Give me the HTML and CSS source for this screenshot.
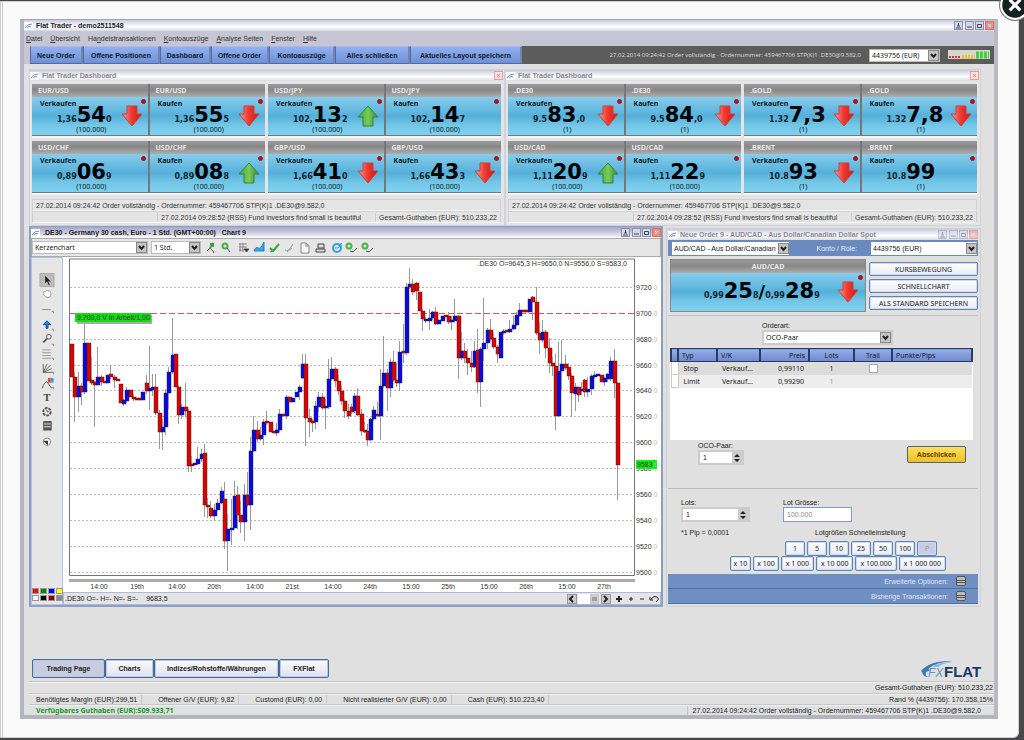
FILE: index.html
```html
<!DOCTYPE html>
<html lang="de">
<head>
<meta charset="utf-8">
<title>Flat Trader</title>
<link rel="stylesheet" href="styles.css">
</head>
<body>
<svg class="defs" aria-hidden="true">
  <defs>
    <linearGradient id="redg" x1="0" x2="1"><stop offset="0" stop-color="#f9a097"/><stop offset=".45" stop-color="#f23c35"/><stop offset="1" stop-color="#c81512"/></linearGradient>
    <linearGradient id="greeng" x1="0" x2="1"><stop offset="0" stop-color="#3fa53a"/><stop offset=".5" stop-color="#7cc957"/><stop offset="1" stop-color="#2f8e34"/></linearGradient>
    <symbol id="down" viewBox="0 0 22 22"><path d="M6 1h10v8h5L11 21 1 9h5z" fill="url(#redg)" stroke="#c9423c"/></symbol>
    <symbol id="up" viewBox="0 0 22 22"><path d="M11 1l10 11h-5v9H6v-9H1z" fill="url(#greeng)" stroke="#2f8544"/></symbol>
    <symbol id="mark" viewBox="0 0 9 8"><path d="M0 0h9v8H0z" fill="#fff"/><path d="M1 6q2-4 7-4M3 6q2-3 4-1" fill="none" stroke="#5c92bd"/></symbol>
    <symbol id="winbtns" viewBox="0 0 40 9">
      <g fill="#d6d8e8" stroke="#8b90ac"><rect x=".5" y=".5" width="8" height="8"/><rect x="11.500" y=".5" width="8" height="8"/><rect x="21.500" y=".5" width="8" height="8"/></g>
      <rect x="31.500" y=".5" width="8" height="8" fill="#ee8f86" stroke="#dd6a62"/>
      <path d="M4.500 2v3M2 7h5M3 5h3M13 6h5M23.500 3.500h4v3h-4z" fill="none" stroke="#40465f"/>
      <path d="M34 3l3 3m0-3l-3 3" stroke="#fff"/>
    </symbol>
    <symbol id="closebtn" viewBox="0 0 9 9"><rect x=".5" y=".5" width="8" height="8" fill="#fbe3e1" stroke="#eb9c96"/><path d="M3 3l3 3m0-3L3 6" stroke="#e37c75"/></symbol>
  </defs>
</svg>
<div class="frame">
  <main class="app">
    <header class="titlebar"><svg class="mark"><use href="#mark"/></svg><b>Flat Trader - demo2511548</b><svg class="winbtns"><use href="#winbtns"/></svg></header>
    <nav class="menu"><a href="#"><u>D</u>atei</a><a href="#"><u>Ü</u>bersicht</a><a href="#">Ha<u>n</u>delstransaktionen</a><a href="#"><u>K</u>ontoauszüge</a><a href="#"><u>A</u>nalyse Seiten</a><a href="#"><u>F</u>enster</a><a href="#"><u>H</u>ilfe</a></nav>
    <div class="toolbar">
      <button>Neue Order</button><button>Offene Positionen</button><button>Dashboard</button><button>Offene Order</button><button>Kontoauszüge</button><button>Alles schließen</button><button>Aktuelles Layout speichern</button>
      <div class="ticker">
        <span>27.02.2014 09:24:42 Order vollständig - Ordernummer: 459467706 STP(K)1 .DE30@9.582,0</span>
        <select class="acct" aria-label="Konto"><option>4439756 (EUR)</option></select>
        <svg class="signal" viewBox="0 0 42 10"><rect width="42" height="9" fill="#d8d4d0"/><path d="M1 7h11" stroke="#d3342e" stroke-width="2" stroke-dasharray="2 1"/><path d="M14 7h13" stroke="#efc32b" stroke-width="4" stroke-dasharray="2 1"/><path d="M28 5h13" stroke="#3ed53a" stroke-width="7" stroke-dasharray="3 1"/></svg>
      </div>
    </div>

    <section class="workspace">
      <div class="dashboards">
        <section class="panel">
          <header class="subtitle"><svg class="mark"><use href="#mark"/></svg><b>Flat Trader Dashboard</b><svg class="closebtn"><use href="#closebtn"/></svg></header>
          <div class="tiles" data-set="fx"></div>
          <div class="status"><p>27.02.2014 09:24:42 Order vollständig - Ordernummer: 459467706 STP(K)1 .DE30@9.582,0</p><p class="right"><span>27.02.2014 09:28:52 (RSS) Fund investors find small is beautiful</span><span>Gesamt-Guthaben (EUR): 510.233,22</span></p></div>
        </section>
        <section class="panel">
          <header class="subtitle"><svg class="mark"><use href="#mark"/></svg><b>Flat Trader Dashboard</b><svg class="closebtn"><use href="#closebtn"/></svg></header>
          <div class="tiles" data-set="cfd"></div>
          <div class="status"><p>27.02.2014 09:24:42 Order vollständig - Ordernummer: 459467706 STP(K)1 .DE30@9.582,0</p><p class="right"><span>27.02.2014 09:28:52 (RSS) Fund investors find small is beautiful</span><span>Gesamt-Guthaben (EUR): 510.233,22</span></p></div>
        </section>
      </div>

      <div class="lower">
        <section class="chartwin">
          <header class="subtitle active"><svg class="mark"><use href="#mark"/></svg><b>.DE30 - Germany 30 cash, Euro - 1 Std. (GMT+00:00) &nbsp; Chart 9</b><svg class="winbtns"><use href="#winbtns"/></svg></header>
          <div class="charttools">
            <select class="kind" aria-label="Charttyp"><option>Kerzenchart</option></select>
            <select class="period" aria-label="Zeitraum"><option>1 Std.</option></select>
            <svg class="icons" viewBox="0 0 170 12" fill="none" stroke="#555">
              <path d="M1 9l3-3 3 3 1 2"/><path d="M4 6l3-5M4 2h3v3" stroke="#35a33a" stroke-width="2"/>
              <circle cx="19" cy="4" r="2.500" stroke="#43b543" stroke-width="2"/><path d="M21 6l3 4"/>
              <path d="M33 2h8M33 5h8M33 8h5M34 1v9M37 1v9" stroke="#888"/><path d="M38 7h5l-2.500 3z" fill="#222"/>
              <path d="M48 9q2-5 4-3t6-6v9z" fill="#35a7dc" stroke="#2384b8"/>
              <path d="M64 10q4 0 6-4" stroke="#777"/><path d="M64 6l3 3 6-7" stroke="#3aa540" stroke-width="2"/>
              <path d="M79 8q3 3 8-6M81 10l5-4" stroke="#999"/>
              <path d="M95 1h5l3 3v7h-8zM100 1v3h3" fill="#f7f7f7" stroke="#888"/>
              <path d="M110 7h9v3h-9zM112 2h6v4h-6z" fill="#ddd" stroke="#444"/>
              <circle cx="131" cy="6" r="4" stroke="#28a4db" stroke-width="2"/><path d="M129 6h3l4-5" stroke="#28a4db"/><path d="M132 4l3-3 1 4z" fill="#28a4db" stroke="none"/>
              <circle cx="143" cy="4" r="2.500" stroke="#43b543" stroke-width="2"/><path d="M144 9l3 1 4-4"/>
              <circle cx="159" cy="4" r="2.500" stroke="#43b543" stroke-width="2"/><path d="M160 9l3 1 4-4"/>
            </svg>
          </div>
          <div class="chartbody">
            <aside class="drawtools">
              <svg viewBox="0 0 32 230" class="drawicons" fill="none" stroke="#555">
                <rect x="8.500" y="16.500" width="15" height="14" fill="#bcbcbc" stroke="#aaa"/><path d="M14 19v8l2-2 2 4 1-1-2-3h3z" fill="#222" stroke="none"/>
                <path d="M12 38q0-3 2-2 1-2 3-1 3-1 3 3v3q-3 3-6 0z" fill="#fff" stroke="#999"/>
                <path d="M11 55h9" stroke="#888"/><path d="M15 75v-4h-3l4-4 4 4h-3v4z" fill="#1c8de5" stroke="#113f9c"/>
                <circle cx="18" cy="84" r="2.500"/><path d="M16 86l-4 4" stroke-width="2"/>
                <path d="M11 98h9M11 101h9M11 104h9M11 107h9" stroke="#999"/><path d="M12 113v9h10M12 122l8-8M12 122l9-4M12 122l4-9" stroke="#666"/>
                <path d="M11 139q2-7 5-7l5 7"/><rect x="17" y="128" width="3" height="5" fill="#e43" stroke="none"/><rect x="20" y="128" width="3" height="5" fill="#28a4db" stroke="none"/>
                <text x="16" y="153" class="tool-t">T</text>
                <circle cx="16" cy="164" r="4" stroke-width="2" stroke-dasharray="3 1"/><path d="M16 162v2h2"/>
                <rect x="12.500" y="174.500" width="8" height="9" fill="#555"/><path d="M13 177h7M13 180h7" stroke="#eee"/>
                <circle cx="16" cy="196" r="4" fill="#fff" stroke="#888"/><path d="M12 195h5v5z" fill="#333" stroke="none"/>
                <path d="M21 57h2v2M21 76h2v2M21 92h2v2M21 107h2v2M21 122h2v2M21 138h2v2" stroke="#888"/>
              </svg>
              <div class="swatches"><i class="red"></i><i class="green"></i><i class="blue"></i><i class="yellow"></i><i class="white"></i><i class="black"></i><i class="maroon"></i><i class="gray"></i></div>
            </aside>
            <div class="plotcol">
              <svg id="plot" viewBox="64 258 598 335"></svg>
              <footer class="chartfoot"><span>.DE30 O=- H=- N=- S=-</span><span>9683,5</span>
                <svg viewBox="0 0 92 10" fill="none" stroke="#222"><rect x=".5" y=".5" width="9" height="9" fill="#ccc" stroke="#999"/><path d="M6 2L3 5l3 3" stroke-width="2"/><path d="M11 0h12v10H11z" fill="#fff" stroke="none"/><path d="M23 0h9v10h-9z" fill="#ccc" stroke="none"/><path d="M25 4h5M25 6h5" stroke="#777"/><rect x="34.500" y=".5" width="9" height="9" fill="#ccc" stroke="#999"/><path d="M37 2l3 3-3 3" stroke-width="2"/><path d="M49 5h6M52 2v6" stroke-width="2"/><path d="M62 5h4M64 3v4M73 5h4"/><path d="M83 3v3h3M84 5q3-4 6-2t-1 5"/></svg>
              </footer>
            </div>
          </div>
        </section>

        <section class="orderwin">
          <header class="subtitle"><svg class="mark"><use href="#mark"/></svg><b>Neue Order 9 - AUD/CAD - Aus Dollar/Canadian Dollar Spot</b><svg class="winbtns faded"><use href="#winbtns"/></svg></header>
          <div class="instrument"><select aria-label="Instrument"><option>AUD/CAD - Aus Dollar/Canadian</option></select><label for="konto">Konto / Role:</label><select id="konto"><option>4439756 (EUR)</option></select></div>
          <div class="quote">
            <div class="tile wide"><h3>AUD/CAD</h3><div class="body"><i class="dot"></i><div class="price"><span>0,99</span><strong>25</strong><span>8</span><strong class="slash">/</strong><span>0,99</span><strong>28</strong><span>9</span><svg class="arrow"><use href="#down"/></svg></div></div></div>
            <div class="qbuttons"><button>KURSBEWEGUNG</button><button>SCHNELLCHART</button><button>ALS STANDARD SPEICHERN</button></div>
          </div>
          <div class="kindrow"><label for="art">Orderart:</label><select id="art"><option>OCO-Paar</option></select></div>
          <div class="tablebox">
            <table>
              <colgroup><col class="c0"><col class="c1"><col class="c2"><col class="c3"><col class="c4"><col class="c5"><col></colgroup>
              <thead><tr><th></th><th>Typ</th><th>V/K</th><th class="num">Preis</th><th class="mid">Lots</th><th class="mid">Trail</th><th>Punkte/Pips</th></tr></thead>
              <tbody><tr class="sel"><td class="handle"></td><td>Stop</td><td>Verkauf...</td><td class="num">0,99110</td><td class="mid">1</td><td class="mid"><input type="checkbox" aria-label="Trail"></td><td></td></tr>
              <tr><td class="handle"></td><td>Limit</td><td>Verkauf...</td><td class="num">0,99290</td><td class="mid dim">1</td><td></td><td></td></tr></tbody>
            </table>
          </div>
          <div class="sendrow"><div class="field"><label for="oco">OCO-Paar:</label><input id="oco" class="spin" value="1"></div><button class="send">Abschicken</button></div>
          <div class="lots">
            <div class="field"><label for="lots">Lots:</label><input id="lots" class="spin" value="1"></div>
            <div class="field"><label for="size">Lot Grösse:</label><input id="size" class="plain" value="100.000"></div>
            <p>*1 Pip = 0,0001</p><p class="quick">Lotgrößen Schnelleinstellung</p>
          </div>
          <div class="nums first"><button>1</button><button>5</button><button>10</button><button>25</button><button>50</button><button>100</button><button class="off">P</button></div>
          <div class="nums second"><button>x 10</button><button>x 100</button><button>x 1 000</button><button>x 10 000</button><button>x 100 000</button><button>x 1 000 000</button></div>
          <div class="more"><button>Erweiterte Optionen: <i></i></button><button>Bisherige Transaktionen: <i></i></button></div>
        </section>
      </div>

      <div class="tabs">
        <button class="current">Trading Page</button><button>Charts</button><button>Indizes/Rohstoffe/Währungen</button><button>FXFlat</button>
        <svg class="logo" viewBox="0 0 64 20"><path d="M1 12Q10 1 33 2 16 3 8 10l3 1-5 2q-1 4 2 5-5 0-6-5z" fill="#3a7cb8"/><path d="M12 8q8-5 20-5-9 1-14 5z" fill="#89b9de"/><text x="8" y="18" class="lg-fx">FX</text><text x="24" y="18" class="lg-flat">FLAT</text></svg>
      </div>
      <footer class="summary">
        <div><span class="end">Gesamt-Guthaben (EUR): 510.233,22</span></div>
        <div class="cells"><span>Benötigtes Margin (EUR):299,51</span><span>Offener G/V (EUR): 9,82</span><span>Customd (EUR): 0,00</span><span>Nicht realisierter G/V (EUR): 0,00</span><span>Cash (EUR): 510.223,40</span><span class="end">Rand % (4439756): 170.358,15%</span></div>
        <div><span class="avail">Verfügbares Guthaben (EUR):509.933,71</span><span class="end last">27.02.2014 09:24:42 Order vollständig - Ordernummer: 459467706 STP(K)1 .DE30@9.582,0</span></div>
      </footer>
    </section>
  </main>
  <button class="close" aria-label="Schließen"><svg viewBox="0 0 30 30"><circle cx="15" cy="15" r="13" fill="#14211f" stroke="#fff" stroke-width="2"/><circle cx="15" cy="15" r="14.500" fill="none" stroke="#777"/><path d="M10 10l10 10m0-10L10 20" stroke="#fff" stroke-width="3"/></svg></button>
</div>
<script src="app.js"></script>
</body>
</html>
```
FILE: styles.css
```css
* { box-sizing: border-box; }
html { background: #48484a; }
body { margin: 0; min-height: 100vh; display: flex; font: 7px/9px "Liberation Sans", Arial, sans-serif; color: #222; background: #48484a; }
html, body { overflow: hidden; }
button, input, select { font: inherit; color: inherit; margin: 0; padding: 0; border-radius: 0; }
button { white-space: nowrap; }
p, h3 { margin: 0; font: inherit; }
.defs { position: absolute; width: 0; height: 0; }
.frame { position: relative; flex: 1; display: flex; margin: 1px 5px 2px 0; padding: 17px 20px 18px 17px; background: #fafafa; border: 1px solid #d0d0d0; border-left: 3px double #ccc; border-radius: 0 0 6px 0; }
.close { position: absolute; right: -13px; top: -13px; width: 32px; height: 32px; border: 0; background: none; }
.close svg { width: 32px; height: 32px; }
.app { flex: 1; min-width: 0; display: flex; flex-direction: column; border: 1px solid #a9abc0; border-width: 1px 4px 4px 4px; border-color: #9fa3bd #b9b9c3 #b4b5bc #b4b4c2; background: #e0e0e0; }

.titlebar, .subtitle { display: flex; align-items: center; gap: 3px; height: 11px; background: linear-gradient(#c9cadd, #fff 60%, #d9dae8); color: #222; }
.titlebar .winbtns, .subtitle .winbtns, .subtitle .closebtn { margin-left: auto; }
.subtitle { color: #888; }
.subtitle.active { background: linear-gradient(#a6a8c6, #c9cbdd 50%, #fff); color: #222; }
.mark { width: 9px; height: 8px; }
.winbtns { width: 40px; height: 9px; }
.faded { opacity: .5; }
.closebtn { width: 9px; height: 9px; }
.menu { display: flex; align-items: center; gap: 8px; height: 15px; padding-left: 2px; background: #c5c5d3; }
.menu a { color: #333; text-decoration: none; }
.toolbar { display: grid; grid-template-columns: 53px 77px 51px 58px 66px 75px 112px 1fr; height: 18px; padding-left: 6px; background: #c5c5d3; }
.toolbar button { border: 1px solid #4e6ba8; border-top-color: #a3bbf0; border-right: 2px solid #7384ae; background: linear-gradient(#92b0f0, #6e90d4); font-weight: 700; color: #10182e; }
.ticker { display: flex; align-items: center; justify-content: flex-end; gap: 6px; padding-right: 4px; background: #5c5c5c; color: #ddd; white-space: nowrap; font: 6px/8px "Open Sans", sans-serif; }
.signal { width: 42px; height: 10px; }
select { appearance: none; height: 13px; border: 1px solid #bbb; padding: 0 13px 0 2px; color: #222; font: 7px/9px "Noto Sans", sans-serif; background: #fff url("data:image/svg+xml,%3Csvg xmlns='http://www.w3.org/2000/svg' width='11' height='11'%3E%3Crect x='.5' y='.5' width='10' height='10' fill='%23c4c4c4' stroke='%23888'/%3E%3Cpath d='M3 4l2.500 3L8 4' fill='none' stroke='%23222' stroke-width='2'/%3E%3C/svg%3E") right center no-repeat; }
.ticker .acct { width: 71px; margin: 0 2px; }

.workspace { flex: 1; display: flex; flex-direction: column; padding-left: 5px; }
.dashboards, .lower { display: grid; }
.dashboards { grid-template-columns: 1fr 1fr; margin: 5px 13px 0 0; }
.panel { padding: 0 3px 2px 2px; border: 1px solid #d2d2dc; background: #e4e4e4; min-width: 0; }
.panel .subtitle { margin: 0 -2px 3px; }
.tiles { display: grid; grid-template-columns: 1fr 1fr; gap: 3px; }
.pair { display: grid; grid-template-columns: 1fr 1fr; gap: 2px; padding-bottom: 1px; background: #777; border-bottom: 2px solid #f5f5f5; }
.tile { min-width: 0; }
.tile h3 { height: 13px; padding: 2px 6px; background: linear-gradient(#9a9a9a, #888 45%, #adadad); color: #e8e8e8; font: 700 7px/9px "Open Sans", sans-serif; }
.body { position: relative; height: 38px; padding: 3px 5px 0 8px; background: linear-gradient(#87cdec, #55b0da 50%, #73c6e6 75%, #80d2f0); color: #0b1a22; }
.label { height: 7px; font: 700 7px/8px "Noto Sans", sans-serif; }
.price { position: relative; display: flex; align-items: baseline; height: 17px; padding-left: 17px; font: 700 8px/17px "DejaVu Sans", sans-serif; }
.price strong { font-size: 21px; line-height: 17px; color: #000; }
.price span { color: #14242c; }
.arrow { width: 22px; height: 22px; margin-left: auto; align-self: center; flex: none; }
.lot { margin-top: 1px; text-align: center; font: 7px/9px "Noto Sans", sans-serif; }
.dot { position: absolute; right: 2px; top: 2px; width: 5px; height: 5px; border-radius: 50%; background: #d00; border: 1px solid #8b1c25; }
.status { margin-top: 4px; }
.status p { height: 12px; padding: 1px 3px; border: 1px solid #d0d0d0; border-bottom-color: #f6f6f6; white-space: nowrap; color: #333; overflow: hidden; }
.status .right { display: flex; justify-content: flex-end; gap: 14px; }
.status .right span { border-left: 1px solid #ccc; padding-left: 3px; }

.lower { grid-template-columns: 634fr 315fr; gap: 3px; margin: 0 13px 0 0; align-items: start; }
.chartwin { border: 1px solid #8e9fc4; border-width: 1px 2px 2px; background: #eee; min-width: 0; }
.charttools { display: flex; align-items: center; gap: 3px; height: 19px; border: 1px solid #aaa; background: #e6e6e6; }
.kind { width: 116px; }
.period { width: 50px; }
.icons { width: 170px; height: 12px; margin-left: 2px; }
.chartbody { display: grid; grid-template-columns: 32px 1fr; }
.drawtools { display: flex; flex-direction: column; justify-content: space-between; border: 1px solid #b4c4e2; background: #e6e6e6; }
.drawicons { width: 100%; }
.tool-t { font: 700 11px "Liberation Serif", serif; text-anchor: middle; fill: #444; stroke: none; }
.swatches { display: grid; grid-template-columns: repeat(4, 7px); gap: 1px; padding-bottom: 3px; }
.swatches i { height: 6px; border: 1px solid #999; }
.red { background: #f00; } .green { background: #080; } .blue { background: #00f; } .yellow { background: #ff0; }
.white { background: #fff; } .black { background: #000; } .maroon { background: #800; } .gray { background: #888; }
.plotcol { min-width: 0; background: #fff; }
#plot { display: block; width: 100%; }
#plot text { font: 7px "Liberation Sans", Arial, sans-serif; fill: #333; }
#plot .minor { fill: #bbb; }
#plot .axis { text-anchor: middle; }
.chartfoot { display: flex; align-items: center; gap: 8px; height: 13px; padding: 0 1px; border: 1px solid #a9bbdc; background: #e4e4e4; }
.chartfoot svg { width: 92px; height: 10px; margin-left: auto; }

.orderwin { margin-top: 2px; border: 1px solid #cfcfd8; padding: 0 2px 2px 1px; background: #e0e0e0; min-width: 0; }
.instrument { display: grid; grid-template-columns: 117px 1fr 106px; align-items: center; height: 16px; padding: 0 1px 0 4px; background: #6a89be; }
.instrument label { color: #e8eefa; padding-right: 14px; text-align: right; }
.instrument select { border: 0; min-width: 0; font: inherit; }
.quote { display: grid; grid-template-columns: 196px 1fr; gap: 3px; padding: 3px 0 3px 2px; border-bottom: 1px solid #c2c2c2; }
.wide { border: 1px solid #888; }
.wide h3 { text-align: center; }
.wide .body { padding-top: 10px; }
.wide .price { padding-left: 25px; }
.wide .arrow { margin-right: 1px; }
.price .slash { font-size: 18px; }
.qbuttons { display: grid; gap: 3px; padding: 3px 0 2px; }
.qbuttons button, .nums button { border: 1px solid #6384b4; border-radius: 2px; background: linear-gradient(#fff, #e6eaf6); box-shadow: inset 0 0 0 1px #cfdcf0; font: 7px/9px "Noto Sans", sans-serif; }
.kindrow { width: 131px; margin: 5px 0 3px 94px; }
.kindrow label, .field label { display: block; }
.kindrow select { width: 100%; height: 15px; border: 2px solid #ccc; }
.tablebox { height: 92px; margin: 0 5px 0 2px; background: #fff; }
table { width: 100%; border-collapse: collapse; table-layout: fixed; font: 7px/9px "Noto Sans", sans-serif; }
.c0 { width: 7px; } .c1 { width: 39px; } .c2 { width: 43px; } .c3 { width: 49px; } .c4 { width: 45px; } .c5 { width: 38px; }
th { height: 13px; padding: 0 3px; text-align: left; font-weight: 400; background: linear-gradient(#96aee8, #6d88cc); border: 2px solid #2d3a60; border-width: 1px 2px; color: #10182e; }
td { height: 13px; padding: 0 5px; background: #ededed; }
.sel td { background: #dcdcdc; }
.num { text-align: right; } .mid { text-align: center; } .dim { color: #999; }
tr .handle { background: #fff; border: 1px solid #ccc; padding: 0; }
td input { display: block; appearance: none; width: 9px; height: 9px; margin: 0 auto; background: #fff; border: 1px solid #aaa; }
.sendrow { display: flex; justify-content: space-between; height: 49px; padding: 1px 12px 0 30px; border-bottom: 1px solid #bbb; }
.field input { display: block; width: 69px; height: 15px; padding: 0 3px; border: 2px solid #ccc; background: #fff; }
.field .spin { background: #fff url("data:image/svg+xml,%3Csvg xmlns='http://www.w3.org/2000/svg' width='10' height='11'%3E%3Crect width='10' height='11' fill='%23ccc'/%3E%3Cpath d='M2 5l3-3 3 3zM2 7h6l-3 3z' fill='%23222'/%3E%3C/svg%3E") right center no-repeat; }
.sendrow .spin { width: 46px; }
.field .plain { border: 1px solid #8199c9; color: #888; }
.send { width: 59px; height: 17px; margin-top: 5px; border: 1px solid #50627c; border-radius: 2px; background: linear-gradient(#ffdf5c, #efbf25); color: #5a3d00; font-weight: 700; }
.lots { display: grid; grid-template-columns: 102px 1fr; row-gap: 6px; padding: 9px 0 4px 13px; }
.quick { padding-left: 32px; }
.nums { display: flex; justify-content: flex-end; gap: 2px; height: 15px; }
.nums button { padding: 0 3px; }
.first { padding-right: 41px; }
.first button { width: 20px; }
.second { padding-right: 32px; }
.second button:nth-child(n+3) { padding: 0 4px; }
.nums .off { background: #c8cce4; color: #999; }
.more { margin-top: 3px; }
.more button { display: flex; align-items: center; justify-content: flex-end; gap: 8px; width: 100%; height: 15px; padding-right: 12px; border: 0; border-bottom: 1px solid #4c72ac; background: #6f8fc2; color: #dfe8f7; }
.more i { width: 10px; height: 10px; border: 1px solid #555; border-radius: 2px; background: linear-gradient(#bbb 35%, #555 35% 45%, #bbb 45% 60%, #555 60% 70%, #bbb 70%); }

.tabs { display: flex; align-items: center; margin-top: auto; height: 21px; margin-left: 3px; }
.tabs button { height: 19px; border: 1px solid #446b9d; border-radius: 2px; box-shadow: inset 0 0 0 1px #b9c9e2; background: linear-gradient(#fafaff, #dfe1f0); font-weight: 700; }
.tabs button:nth-child(1) { width: 73px; } .tabs button:nth-child(2) { width: 49px; } .tabs button:nth-child(3) { width: 125px; } .tabs button:nth-child(4) { width: 50px; }
.tabs .current { background: #c9cbdf; }
.logo { width: 64px; height: 20px; margin: 0 10px 0 auto; }
.lg-fx { font: italic 12px "Liberation Sans", sans-serif; fill: #5d97c9; }
.lg-flat { font: 700 15px "Liberation Sans", sans-serif; fill: #1c3764; }
.summary { margin-top: 2px; }
.summary div { display: flex; height: 11px; align-items: center; padding-left: 7px; border-top: 1px solid #c6c6c6; box-shadow: inset 0 1px #f0f0f0; white-space: nowrap; }
.summary div:first-child { height: 12px; }
.cells span { padding-right: 4px; border-right: 1px solid #c6c6c6; margin-right: 16px; }
.summary .end { margin: 0 1px 0 auto; padding: 0; border: 0; }
.summary .last { margin-right: 13px; border-left: 1px solid #c6c6c6; padding-left: 5px; }
.avail { color: #149a25; font: 700 7px/9px "Noto Sans", sans-serif; }
```
FILE: app.js
```js
const quotes = {
  fx: [
    ['EUR/USD', '100.000', ['1,36', '54', '0', 'down'], ['1,36', '55', '5', 'down']],
    ['USD/JPY', '100.000', ['102,', '13', '2', 'up'], ['102,', '14', '7', '']],
    ['USD/CHF', '100.000', ['0,89', '06', '9', ''], ['0,89', '08', '8', 'up']],
    ['GBP/USD', '100.000', ['1,66', '41', '0', 'down'], ['1,66', '43', '3', 'down']]
  ],
  cfd: [
    ['.DE30', '1', ['9.5', '83', ',0', 'down'], ['9.5', '84', ',0', 'down']],
    ['.GOLD', '1', ['1.32', '7,3', '', 'down'], ['1.32', '7,8', '', 'down']],
    ['USD/CAD', '100.000', ['1,11', '20', '9', 'up'], ['1,11', '22', '9', '']],
    ['.BRENT', '1', ['10.8', '93', '', 'down'], ['10.8', '99', '', '']]
  ]
};

function tile(name, lot, side, [pre, big, sub, arrow]) {
  const icon = arrow ? `<svg class="arrow"><use href="#${arrow}"/></svg>` : '';
  return `<div class="tile"><h3>${name}</h3><div class="body"><i class="dot"></i>
    <div class="label">${side}</div>
    <div class="price"><span>${pre}</span><strong>${big}</strong><span>${sub}</span>${icon}</div>
    <div class="lot">(${lot})</div></div></div>`;
}

document.querySelectorAll('.tiles').forEach(box => {
  box.innerHTML = quotes[box.dataset.set].map(([name, lot, sell, buy]) =>
    `<div class="pair">${tile(name, lot, 'Verkaufen', sell)}${tile(name, lot, 'Kaufen', buy)}</div>`).join('');
});

// x, body top, body bottom, colour, wick top, wick bottom
const candles = `72 345 378 r;75 378 398 r 373 423;79 387 398 b 373 413;82 387 393 r 384 406;85 344 393 b 325 395;89 344 382 r;92 381 384 r 358 386;95 383 386 r 382 428;98 378 386 b 348 386;102 378 383 r 376 387;105 382 384 r;108 376 384 b;111 375 378 r 366 380;115 378 381 r 376 389;118 380 382 r;121 385 404 r;124 401 405 b 400 407;127 391 402 b 388 404;131 391 398 r;134 398 400 r 395 402;137 399 401 r;140 399 401 r;143 393 401 b;147 384 392 r 376 395;150 389 392 b 347 411;153 388 391 b 375 397;156 388 414 r 375 416;160 414 433 r 411 450;163 428 433 b 420 451;166 394 428 b 390 436;169 373 394 b 368 410;173 356 373 b 319 375;176 355 388 r;179 388 416 r 386 425;182 408 416 b 405 420;186 408 412 r 384 418;189 412 467 r 410 473;192 465 467 r 457 473;195 464 466 b;198 460 465 b 448 466;202 455 460 b 450 463;205 454 506 r 445 518;208 506 508 r 499 519;211 509 517 r 502 519;215 511 517 b 505 522;218 504 511 b 500 511;222 492 504 b 488 505;225 500 542 r 483 550;228 530 542 b 515 572;232 529 531 b 500 546;235 497 529 b 482 530;238 496 516 r 487 530;241 516 523 r 502 534;245 496 523 b 485 542;248 496 506 r 473 508;251 452 506 b 438 531;254 431 452 b 417 453;258 431 440 r 422 443;261 436 440 b 428 442;264 423 436 b 420 446;267 422 424 r 412 426;271 423 433 r;274 432 434 r;277 431 434 b 424 437;280 415 431 b 410 433;284 415 417 r;287 398 417 b 396 420;290 398 403 r;293 399 403 b;297 393 398 b;300 388 393 b 386 401;303 365 379 b 355 380;306 365 419 r 355 447;310 419 423 r 410 438;313 422 424 r 420 433;316 407 423 b 402 430;319 398 408 b 393 413;323 398 409 r 394 411;326 407 409 b 400 430;329 380 408 b 360 410;332 370 380 b 358 382;336 370 382 r 368 388;339 382 392 r 376 396;342 392 402 r 386 406;345 402 412 r 400 419;349 412 417 r 405 420;352 408 413 r 405 415;355 397 412 b 394 414;358 397 416 r 389 417;362 415 432 r 410 437;365 431 433 r 423 434;368 432 441 r 425 447;371 420 441 b 419 442;374 411 420 b 407 422;378 415 417 r 403 418;381 387 417 b 370 441;384 374 387 b 337 389;388 374 389 r 370 412;391 363 389 b 360 398;394 363 381 r 352 383;397 381 384 r 364 388;400 353 384 b 342 392;404 352 354 r 325 364;407 288 354 b 284 356;410 285 288 b 269 290;413 285 293 r 280 296;417 284 292 r 283 301;420 293 312 r;423 312 320 r 310 332;426 320 322 b 318 324;430 319 322 b 310 331;433 313 319 b 312 321;436 313 325 r 308 326;439 321 325 b;443 317 322 b;446 316 318 r;449 317 323 r 313 325;452 321 323 b 317 331;455 317 322 b 300 324;459 317 359 r 316 380;462 352 359 b 333 361;465 352 359 r 344 364;468 359 364 r 350 376;472 364 368 r 352 373;475 352 368 b 342 369;478 351 383 r 330 394;481 350 383 b 348 408;484 344 350 b 299 362;488 331 344 b 329 350;491 331 340 r 320 342;494 339 348 r 334 350;498 348 355 r 346 364;501 333 359 b;504 332 334 b 330 336;507 331 333 r;510 330 333 b 321 334;514 326 330 b 317 331;517 316 326 b 313 327;520 311 317 b 304 318;524 311 313 r;527 311 313 r;530 300 313 b;533 298 303 r 297 321;537 303 334 r 288 336;540 334 341 r 323 355;543 333 341 b 321 343;546 333 349 r 331 359;550 349 364 r 339 374;553 364 367 r 358 377;556 367 417 r 355 431;559 372 417 b 343 418;562 365 372 b 341 391;566 365 369 r 356 371;569 368 377 r 364 381;572 377 394 r 374 418;576 388 395 b 384 412;579 388 396 r 388 403;582 390 392 b 383 396;585 381 393 r 380 398;588 390 393 b 378 398;592 377 390 b 375 396;595 376 378 b 372 380;598 375 377 b;602 376 383 r;605 379 383 b 378 387;608 375 380 b 374 383;611 362 380 b 358 382;615 362 384 r 350 399;618 384 466 r 383 501`;

const parts = ['<path d="M70.500 260v316.500h565V260z" fill="#fff" stroke="#777"/><path d="M70 581.500h566" stroke="#aaa" stroke-width="3"/>'];
for (let i = 0; i < 12; i++) {
  const y = Math.round(288 + i * 25.87);
  const main = i === 1;
  parts.push(`<path d="M71 ${y}.5h564" stroke="${main ? '#e05555' : '#bbb'}" stroke-dasharray="${main ? '6 3' : '2 2'}"/>`);
  parts.push(`<text x="637" y="${y + 3}">${9720 - i * 20}<tspan class="minor">.0</tspan></text>`);
}
candles.split(';').forEach(row => {
  const [x, top, bottom, colour, high, low] = row.split(' ');
  parts.push(`<path d="M${x}.5 ${high || top}V${low || bottom}" stroke="#999"/>`);
  parts.push(`<rect x="${x - 1}" y="${top}" width="4" height="${bottom - top}" fill="${colour === 'r' ? '#e00000' : '#0a0ae0'}" stroke="#222" stroke-opacity=".6" stroke-width=".7"/>`);
});
[['14:00', 100], ['19th', 138], ['14:00', 178], ['20th', 215], ['14:00', 256], ['21st', 293], ['14:00', 334], ['24th', 371], ['15:00', 412], ['25th', 449], ['15:00', 490], ['26th', 527], ['15:00', 568], ['27th', 605]]
  .forEach(([label, x]) => parts.push(`<text class="axis" x="${x}" y="590">${label}</text>`));
parts.push('<rect x="78" y="316" width="75" height="9" fill="#aaa"/><rect x="76" y="314" width="76" height="9" fill="#12dd12"/><text x="78" y="321">9.700,0 V in Arbeit/1,00</text>');
parts.push('<rect x="637" y="461" width="21" height="9" fill="#12ee12"/><text x="638" y="468">9583<tspan class="minor">.0</tspan></text>');
parts.push('<text x="628" y="267" text-anchor="end">.DE30 O=9645,3 H=9650,0 N=9556,0 S=9583,0</text>');
document.getElementById('plot').innerHTML = parts.join('');
```
